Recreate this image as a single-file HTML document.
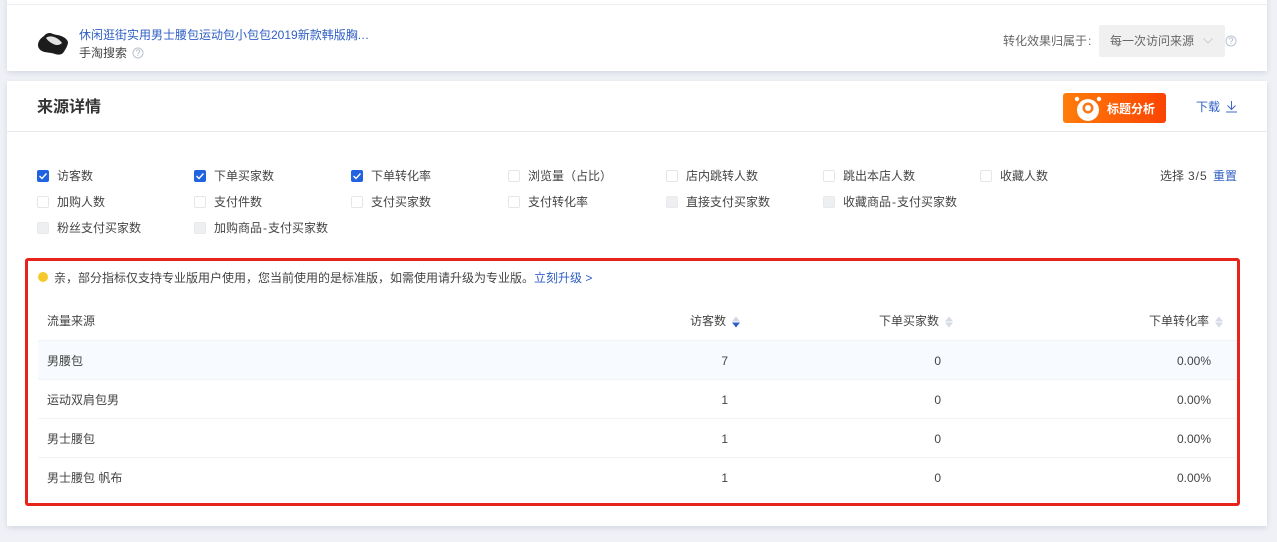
<!DOCTYPE html>
<html lang="zh-CN"><head><meta charset="utf-8"><title>来源详情</title>
<style>
html,body{margin:0;padding:0}
body{width:1277px;height:542px;overflow:hidden;position:relative;background:#eff1f6;font-family:"Liberation Sans","Noto Sans CJK SC",sans-serif;font-size:12px;color:#444;line-height:16px}
.a{position:absolute;white-space:nowrap}
.card{position:absolute;left:7px;width:1260px;background:#fff;box-shadow:0 2px 5px rgba(120,130,150,.22)}
.blue{color:#2f5fc4}
.cb{position:absolute;width:12px;height:12px;box-sizing:border-box;border:1px solid #e4e6ea;border-radius:2px;background:#fff}
.cb.on{background:#2062e0;border-color:#2062e0}
.cb.dis{background:#eeeff1;border-color:#e8e9ec}
.cb svg{position:absolute;left:0;top:0}
.lb{position:absolute;white-space:nowrap}
.line{position:absolute;left:38px;width:1199px;height:1px;background:#f2f3f5}
.n{position:absolute;white-space:nowrap;text-align:right}
.h{margin:0 1px}
</style></head><body>

<div class="card" style="top:-10px;height:81px"></div>
<div class="a" style="left:7px;top:4px;width:1260px;height:1px;background:#eceef1"></div>

<svg class="a" style="left:36px;top:30px" width="34" height="28" viewBox="0 0 34 28">
<path d="M2 15 C2 11 5 8 8 6 C10 3 14 2 17 4 C20 5 23 5 25 6 C28 7 31 9 32 12 C32 15 30 19 27 23 C25 25 22 25 19 24 C14 22 9 23 6 21 C4 20 2 18 2 15Z" fill="#1c1c1c"/>
<path d="M10 8 C12 6 15 6 18 7 C21 8 24 10 26 13 C24 15 22 15 20 15 C16 14 12 11 10 8Z" fill="#e2e2e2"/>
</svg>
<div class="a blue" style="left:79px;top:27px">休闲逛街实用男士腰包运动包小包包2019新款韩版胸<span style="letter-spacing:.5px">...</span></div>
<div class="a" style="left:79px;top:45px;color:#444">手淘搜索</div>
<svg class="a" style="left:132px;top:47px" width="12" height="12" viewBox="0 0 12 12"><circle cx="6" cy="6" r="5" fill="none" stroke="#b9c2cf"/><text x="6" y="9" font-size="9" text-anchor="middle" fill="#a9b3c1" font-family="Liberation Sans">?</text></svg>

<div class="a" style="left:1003px;top:33px;color:#666">转化效果归属于<span style="margin-left:1px">:</span></div>
<div class="a" style="left:1099px;top:25px;width:126px;height:32px;background:#f0f0f1;border-radius:2px"></div>
<div class="a" style="left:1110px;top:33px;color:#666">每一次访问来源</div>
<svg class="a" style="left:1202px;top:37px" width="12" height="8" viewBox="0 0 12 8"><path d="M1.5 1.5 L6 6 L10.5 1.5" fill="none" stroke="#ccced2" stroke-width="1"/></svg>
<svg class="a" style="left:1225px;top:35px" width="12" height="12" viewBox="0 0 12 12"><circle cx="6" cy="6" r="5" fill="none" stroke="#b9c2cf"/><text x="6" y="9" font-size="9" text-anchor="middle" fill="#a9b3c1" font-family="Liberation Sans">?</text></svg>

<div class="card" style="top:81px;height:445px"></div>
<div class="a" style="left:37px;top:97px;font-size:16px;font-weight:bold;line-height:22px;color:#333">来源详情</div>
<div class="a" style="left:7px;top:131px;width:1260px;height:1px;background:#e8e9ec"></div>

<div class="a" style="left:1063px;top:93px;width:103px;height:30px;border-radius:3px;background:linear-gradient(90deg,#ff7d0a,#fb4402)"></div>
<svg class="a" style="left:1073px;top:95px" width="30" height="27" viewBox="0 0 30 27">
<circle cx="15" cy="15" r="11" fill="#fff"/><circle cx="4" cy="4" r="2.2" fill="#fff"/><circle cx="26" cy="4" r="2.2" fill="#fff"/>
<circle cx="15" cy="13" r="5.5" fill="#f9791a"/><circle cx="15" cy="13" r="3" fill="#fff"/>
</svg>
<div class="a" style="left:1107px;top:101px;color:#fff;font-weight:bold">标题分析</div>
<div class="a blue" style="left:1196px;top:99px">下载</div>
<svg class="a" style="left:1225px;top:100px" width="13" height="13" viewBox="0 0 13 13"><path d="M6.5 1 V9 M2.5 5.5 L6.5 9.5 L10.5 5.5 M1 12 H12" fill="none" stroke="#3f68c4" stroke-width="1"/></svg>

<!-- checkboxes -->
<div class="cb on" style="left:37px;top:170px"><svg width="10" height="10" viewBox="0 0 10 10"><path d="M1.5 5 L4 7.5 L8.5 2.5" fill="none" stroke="#fff" stroke-width="1.4"/></svg></div><div class="lb" style="left:57px;top:168px">访客数</div>
<div class="cb on" style="left:194px;top:170px"><svg width="10" height="10" viewBox="0 0 10 10"><path d="M1.5 5 L4 7.5 L8.5 2.5" fill="none" stroke="#fff" stroke-width="1.4"/></svg></div><div class="lb" style="left:214px;top:168px">下单买家数</div>
<div class="cb on" style="left:351px;top:170px"><svg width="10" height="10" viewBox="0 0 10 10"><path d="M1.5 5 L4 7.5 L8.5 2.5" fill="none" stroke="#fff" stroke-width="1.4"/></svg></div><div class="lb" style="left:371px;top:168px">下单转化率</div>
<div class="cb" style="left:508px;top:170px"></div><div class="lb" style="left:528px;top:168px">浏览量（占比）</div>
<div class="cb" style="left:666px;top:170px"></div><div class="lb" style="left:686px;top:168px">店内跳转人数</div>
<div class="cb" style="left:823px;top:170px"></div><div class="lb" style="left:843px;top:168px">跳出本店人数</div>
<div class="cb" style="left:980px;top:170px"></div><div class="lb" style="left:1000px;top:168px">收藏人数</div>
<div class="a" style="left:1160px;top:168px">选择</div><div class="a" style="left:1188px;top:168px;letter-spacing:1px">3/5</div><div class="a blue" style="left:1213px;top:168px">重置</div>

<div class="cb" style="left:37px;top:196px"></div><div class="lb" style="left:57px;top:194px">加购人数</div>
<div class="cb" style="left:194px;top:196px"></div><div class="lb" style="left:214px;top:194px">支付件数</div>
<div class="cb" style="left:351px;top:196px"></div><div class="lb" style="left:371px;top:194px">支付买家数</div>
<div class="cb" style="left:508px;top:196px"></div><div class="lb" style="left:528px;top:194px">支付转化率</div>
<div class="cb dis" style="left:666px;top:196px"></div><div class="lb" style="left:686px;top:194px">直接支付买家数</div>
<div class="cb dis" style="left:823px;top:196px"></div><div class="lb" style="left:843px;top:194px">收藏商品<span class="h">-</span>支付买家数</div>

<div class="cb dis" style="left:37px;top:222px"></div><div class="lb" style="left:57px;top:220px">粉丝支付买家数</div>
<div class="cb dis" style="left:194px;top:222px"></div><div class="lb" style="left:214px;top:220px">加购商品<span class="h">-</span>支付买家数</div>

<!-- notice -->
<div class="a" style="left:38px;top:272px;width:10px;height:10px;border-radius:50%;background:#f5c92b"></div>
<div class="a" style="left:54px;top:270px">亲，部分指标仅支持专业版用户使用，您当前使用的是标准版，如需使用请升级为专业版。<span class="blue">立刻升级 &gt;</span></div>

<!-- table -->
<div class="a" style="left:38px;top:341px;width:1199px;height:38px;background:#f7fafe"></div>
<div class="line" style="top:340px"></div>
<div class="line" style="top:379px"></div>
<div class="line" style="top:418px"></div>
<div class="line" style="top:457px"></div>

<div class="a" style="left:47px;top:313px">流量来源</div>
<div class="a" style="left:690px;top:313px">访客数</div>
<svg class="a" style="left:732px;top:316px" width="8" height="12" viewBox="0 0 8 12"><path d="M4 .5 L8 5.5 H0Z" fill="#cfd7e4"/><path d="M4 11.5 L8 6.5 H0Z" fill="#2f5fc4"/></svg>
<div class="a" style="left:879px;top:313px">下单买家数</div>
<svg class="a" style="left:945px;top:316px" width="8" height="12" viewBox="0 0 8 12"><path d="M4 .5 L8 5.5 H0Z" fill="#d5dbe5"/><path d="M4 11.5 L8 6.5 H0Z" fill="#d5dbe5"/></svg>
<div class="a" style="left:1149px;top:313px">下单转化率</div>
<svg class="a" style="left:1215px;top:316px" width="8" height="12" viewBox="0 0 8 12"><path d="M4 .5 L8 5.5 H0Z" fill="#d5dbe5"/><path d="M4 11.5 L8 6.5 H0Z" fill="#d5dbe5"/></svg>

<div class="a" style="left:47px;top:353px">男腰包</div>
<div class="n" style="right:549px;top:353px">7</div><div class="n" style="right:336px;top:353px">0</div><div class="n" style="right:66px;top:353px">0.00%</div>
<div class="a" style="left:47px;top:392px">运动双肩包男</div>
<div class="n" style="right:549px;top:392px">1</div><div class="n" style="right:336px;top:392px">0</div><div class="n" style="right:66px;top:392px">0.00%</div>
<div class="a" style="left:47px;top:431px">男士腰包</div>
<div class="n" style="right:549px;top:431px">1</div><div class="n" style="right:336px;top:431px">0</div><div class="n" style="right:66px;top:431px">0.00%</div>
<div class="a" style="left:47px;top:470px">男士腰包 帆布</div>
<div class="n" style="right:549px;top:470px">1</div><div class="n" style="right:336px;top:470px">0</div><div class="n" style="right:66px;top:470px">0.00%</div>

<div class="a" style="left:25px;top:258px;width:1215px;height:248px;box-sizing:border-box;border:3px solid #e8231c;border-radius:3px"></div>
</body></html>
